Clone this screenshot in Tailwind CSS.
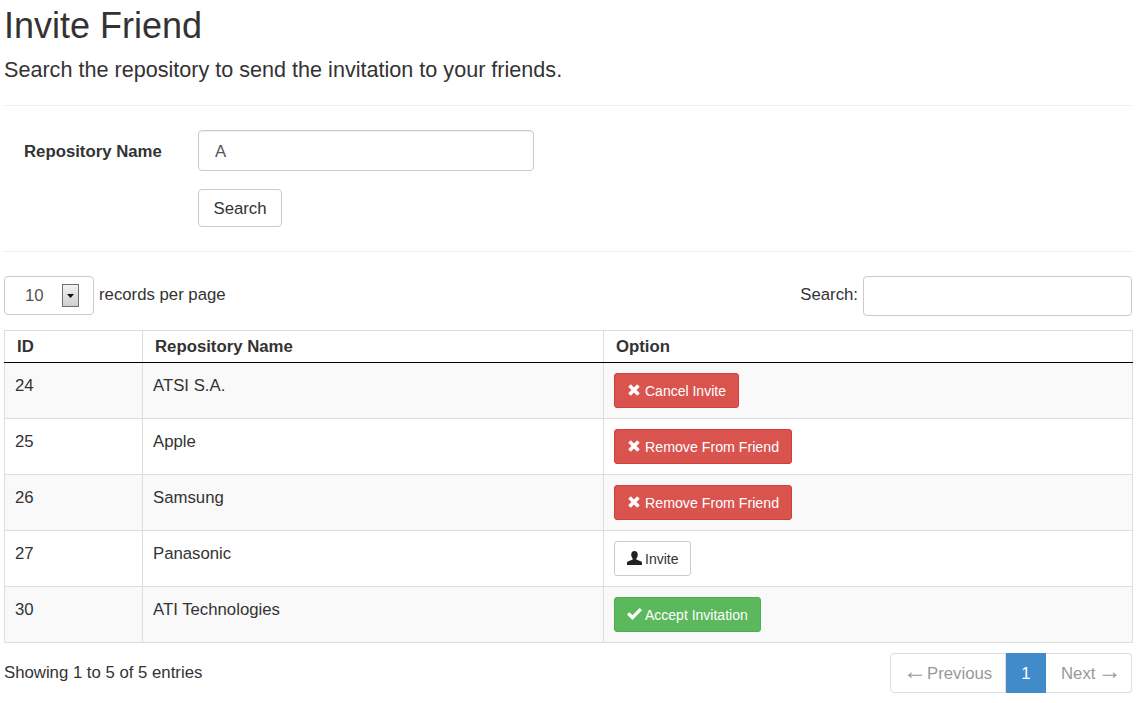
<!DOCTYPE html>
<html lang="en">
<head>
  <meta charset="UTF-8" />
  <title>Invite Friend</title>
  <script src="https://cdn.jsdelivr.net/npm/@tailwindcss/browser@4"></script>
</head>
<body class="bg-white font-['Liberation_Sans',Arial,sans-serif] text-[16.75px] leading-[22px] text-[#333]">
  <div class="px-[4px] w-[1136px]">
    <h1 class="text-[36px] leading-[40px] font-normal pt-[6px]">Invite Friend</h1>
    <p class="text-[21.6px] leading-[28px] mt-[10px]">Search the repository to send the invitation to your friends.</p>
    <hr class="border-[#eee] mt-[21px]" />

    <form class="pt-[24px]">
      <div class="flex items-center">
        <label class="w-[194px] pl-[20px] pt-[2px] font-bold">Repository Name</label>
        <input type="text" value="A" class="w-[336px] h-[41px] px-[16px] pt-[2px] border border-[#ccc] rounded-[4px] text-[#555] shadow-[inset_0_1px_1px_rgba(0,0,0,0.075)]" />
      </div>
      <div class="pl-[194px] mt-[18px]">
        <button type="button" class="h-[38px] w-[84px] pt-[2px] border border-[#ccc] rounded-[4px] bg-white text-[#333]">Search</button>
      </div>
    </form>
    <hr class="border-[#eee] mt-[24px]" />

    <div class="flex items-start justify-between mt-[24px] h-[40px]">
      <div class="flex items-center gap-[5px]">
        <div class="w-[90px] h-[39px] border border-[#ccc] rounded-[4px] flex items-center text-[#555] pl-[20px]">
          <span class="w-[37px]">10</span>
          <span class="w-[17px] h-[23px] border border-[#707070] bg-gradient-to-b from-[#f2f2f2] to-[#cfcfcf] flex items-center justify-center">
            <svg width="7" height="4" viewBox="0 0 7 4"><path d="M0 0h7L3.500 4z" fill="#111" /></svg>
          </span>
        </div>
        <span class="mb-[2px]">records per page</span>
      </div>
      <div class="flex items-center gap-[5px]">
        <span class="mb-[2px]">Search:</span>
        <input type="text" class="w-[269px] h-[40px] border border-[#ccc] rounded-[4px]" />
      </div>
    </div>

    <table class="w-[1129px] mt-[14px] table-fixed border-collapse border border-[#ddd]">
      <colgroup>
        <col class="w-[138px]" />
        <col class="w-[461px]" />
        <col />
      </colgroup>
      <thead>
        <tr class="h-[32px] text-left font-bold">
          <th class="pl-[12px] border-r border-[#ddd] border-b border-b-black">ID</th>
          <th class="pl-[12px] border-r border-[#ddd] border-b border-b-black">Repository Name</th>
          <th class="pl-[12px] border-b border-b-black">Option</th>
        </tr>
      </thead>
      <tbody>
        <tr class="h-[56px] bg-[#f9f9f9] border-b border-[#ddd]">
          <td class="pl-[10px] pt-[12px] align-top border-r border-[#ddd]">24</td>
          <td class="pl-[10px] pt-[12px] align-top border-r border-[#ddd]">ATSI S.A.</td>
          <td class="pl-[10px] align-middle">
            <button type="button" class="h-[35px] px-[12px] inline-flex items-center gap-[5px] text-[14px] rounded-[3px] border border-[#d43f3a] bg-[#d9534f] text-white">
              <svg class="ml-[1px] mb-[1px]" width="12" height="12" viewBox="0 0 14 14"><path d="M3.300 .8 7 4.500 10.700 .8 13.200 3.300 9.500 7 13.200 10.700 10.700 13.200 7 9.500 3.300 13.200 .8 10.700 4.500 7 .8 3.300z" fill="#fff" stroke="#fff" stroke-linejoin="round" /></svg>
              Cancel Invite
            </button>
          </td>
        </tr>
        <tr class="h-[56px] border-b border-[#ddd]">
          <td class="pl-[10px] pt-[12px] align-top border-r border-[#ddd]">25</td>
          <td class="pl-[10px] pt-[12px] align-top border-r border-[#ddd]">Apple</td>
          <td class="pl-[10px] align-middle">
            <button type="button" class="h-[35px] px-[12px] inline-flex items-center gap-[5px] text-[14.2px] rounded-[3px] border border-[#d43f3a] bg-[#d9534f] text-white">
              <svg class="ml-[1px] mb-[1px]" width="12" height="12" viewBox="0 0 14 14"><path d="M3.300 .8 7 4.500 10.700 .8 13.200 3.300 9.500 7 13.200 10.700 10.700 13.200 7 9.500 3.300 13.200 .8 10.700 4.500 7 .8 3.300z" fill="#fff" stroke="#fff" stroke-linejoin="round" /></svg>
              Remove From Friend
            </button>
          </td>
        </tr>
        <tr class="h-[56px] bg-[#f9f9f9] border-b border-[#ddd]">
          <td class="pl-[10px] pt-[12px] align-top border-r border-[#ddd]">26</td>
          <td class="pl-[10px] pt-[12px] align-top border-r border-[#ddd]">Samsung</td>
          <td class="pl-[10px] align-middle">
            <button type="button" class="h-[35px] px-[12px] inline-flex items-center gap-[5px] text-[14.2px] rounded-[3px] border border-[#d43f3a] bg-[#d9534f] text-white">
              <svg class="ml-[1px] mb-[1px]" width="12" height="12" viewBox="0 0 14 14"><path d="M3.300 .8 7 4.500 10.700 .8 13.200 3.300 9.500 7 13.200 10.700 10.700 13.200 7 9.500 3.300 13.200 .8 10.700 4.500 7 .8 3.300z" fill="#fff" stroke="#fff" stroke-linejoin="round" /></svg>
              Remove From Friend
            </button>
          </td>
        </tr>
        <tr class="h-[56px] border-b border-[#ddd]">
          <td class="pl-[10px] pt-[12px] align-top border-r border-[#ddd]">27</td>
          <td class="pl-[10px] pt-[12px] align-top border-r border-[#ddd]">Panasonic</td>
          <td class="pl-[10px] align-middle">
            <button type="button" class="h-[35px] px-[12px] inline-flex items-center gap-[3px] text-[14px] rounded-[3px] border border-[#ccc] bg-white text-[#333]">
              <svg class="mb-[2px]" width="15" height="14" viewBox="0 0 15 14"><path d="M7.500 0C5.400 0 4.200 1.500 4.200 3.700c0 1.500.6 2.900 1.500 3.700v1.100L.8 10.600C.2 10.900 0 11.400 0 12v2h15v-2c0-.6-.2-1.100-.8-1.400L9.300 8.500V7.400c.9-.8 1.500-2.200 1.500-3.700C10.800 1.500 9.600 0 7.500 0z" fill="#222" /></svg>
              Invite
            </button>
          </td>
        </tr>
        <tr class="h-[56px] bg-[#f9f9f9] border-b border-[#ddd]">
          <td class="pl-[10px] pt-[12px] align-top border-r border-[#ddd]">30</td>
          <td class="pl-[10px] pt-[12px] align-top border-r border-[#ddd]">ATI Technologies</td>
          <td class="pl-[10px] align-middle">
            <button type="button" class="h-[35px] px-[12px] inline-flex items-center gap-[3px] text-[14px] rounded-[3px] border border-[#4cae4c] bg-[#5cb85c] text-white">
              <svg class="mb-[1px]" width="15" height="12" viewBox="0 0 15 12"><path d="M0 6.500 2.300 4.200 5.500 7.300 12.700 0 15 2.300 5.500 12z" fill="#fff" /></svg>
              Accept Invitation
            </button>
          </td>
        </tr>
      </tbody>
    </table>

    <div class="flex items-center justify-between mt-[10px]">
      <span>Showing 1 to 5 of 5 entries</span>
      <div class="flex h-[40px] text-[#999]">
        <a class="w-[116px] pl-[12px] flex items-center border border-[#ddd] rounded-l-[4px] bg-white"><span class="text-[24px] leading-none mb-[4px]">←</span><span class="pt-[2px]">Previous</span></a>
        <a class="w-[40px] pt-[2px] flex items-center justify-center bg-[#428bca] text-white">1</a>
        <a class="w-[86px] pl-[15px] flex items-center gap-[2px] border border-l-0 border-[#ddd] rounded-r-[4px] bg-white"><span class="pt-[2px]">Next</span><span class="text-[24px] leading-none mb-[4px]">→</span></a>
      </div>
    </div>
  </div>
</body>
</html>
